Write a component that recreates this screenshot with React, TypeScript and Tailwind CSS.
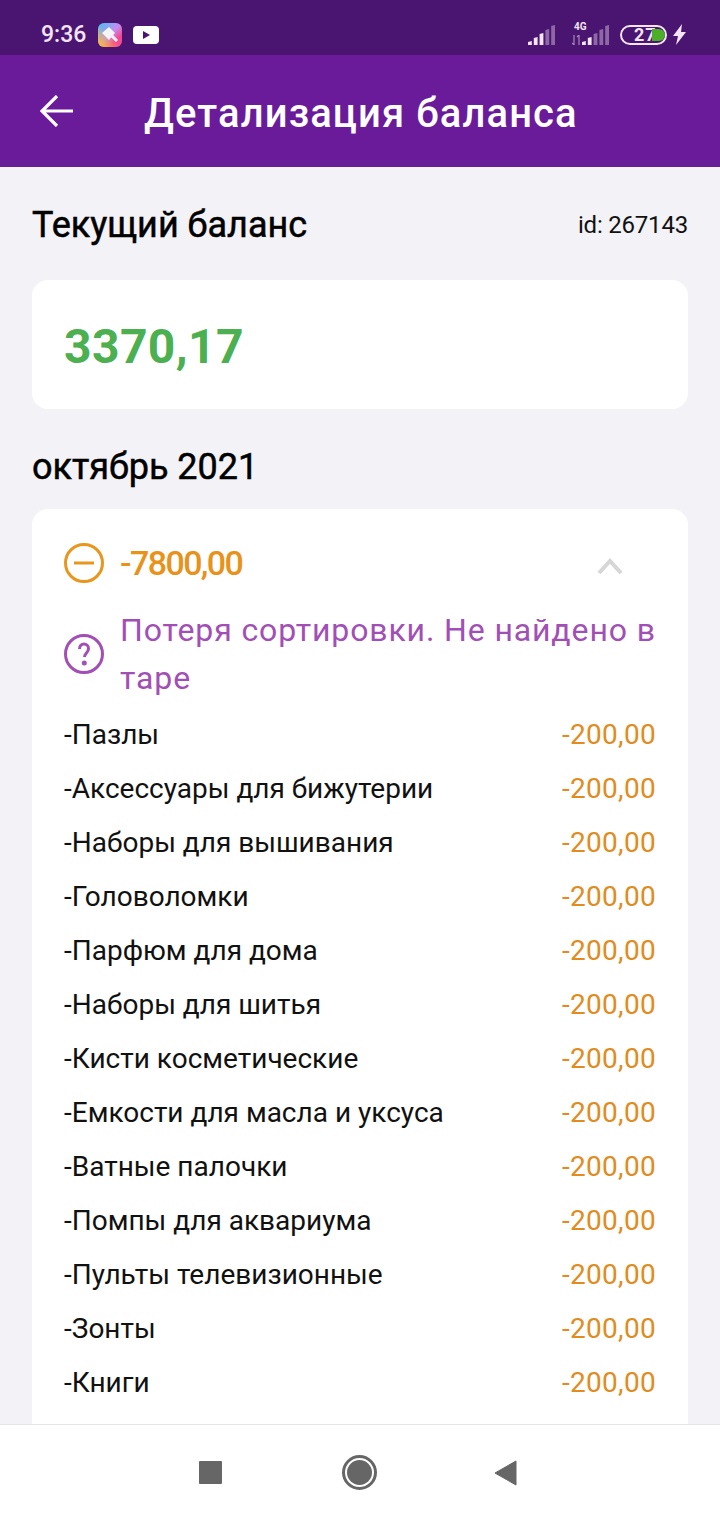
import React from 'react';

const ITEMS = [
  'Пазлы',
  'Аксессуары для бижутерии',
  'Наборы для вышивания',
  'Головоломки',
  'Парфюм для дома',
  'Наборы для шитья',
  'Кисти косметические',
  'Емкости для масла и уксуса',
  'Ватные палочки',
  'Помпы для аквариума',
  'Пульты телевизионные',
  'Зонты',
  'Книги',
];

const Signal: React.FC<{ lit: number; className?: string }> = ({ lit, className }) => (
  <svg width="28" height="20" viewBox="0 0 28 20" className={className}>
    {[0, 1, 2, 3, 4].map(i => {
      const h = 4 + i * 4;
      return (
        <path
          key={i}
          d={`M${i * 5.8} 20v-${h - 1}l3.800 -1v${h}z`}
          fill="#f3e5f5"
          opacity={i < lit ? 1 : 0.4}
        />
      );
    })}
  </svg>
);

const StatusBar = () => (
  <div className="h-[55px] bg-[#4a1570] flex items-center pl-[41px] pr-[34px] pt-[14px] text-[#f3e5f5]">
    <span className="w-[45px] text-[23px] font-medium leading-none">9:36</span>
    <svg width="24" height="24" viewBox="0 0 24 24" className="ml-[12px]">
      <defs>
        <linearGradient id="appIcon" x1="0" y1="0" x2="1" y2="1">
          <stop offset="0" stopColor="#3fc4f5" />
          <stop offset="0.5" stopColor="#c58cf0" />
          <stop offset="0.75" stopColor="#f5478f" />
          <stop offset="1" stopColor="#f04fa0" />
        </linearGradient>
        <linearGradient id="appIconY" x1="0" y1="1" x2="0.5" y2="0.5">
          <stop offset="0" stopColor="#ffc21f" />
          <stop offset="1" stopColor="#ffc21f" stopOpacity="0" />
        </linearGradient>
      </defs>
      <rect width="24" height="24" rx="6" fill="url(#appIcon)" />
      <rect width="24" height="24" rx="6" fill="url(#appIconY)" />
      <path d="M4 10 11 4l6 6-6 7z" fill="#f5f5f5" />
      <path d="m14 13 5 5" stroke="#f5f5f5" strokeWidth="3" />
    </svg>
    <svg width="26" height="18" viewBox="0 0 26 18" className="ml-[11px]">
      <rect width="26" height="18" rx="4" fill="#fff" />
      <path d="M10 5v8l7-4z" fill="#4a1570" />
    </svg>
    <div className="flex-1" />
    <Signal lit={3} className="mt-[1px]" />
    <div className="relative w-[37px] h-[20px] ml-[16px] mt-[1px]">
      <span className="absolute left-[2px] -top-[3px] text-[10px] font-bold leading-none">4G</span>
      <svg width="9" height="10" viewBox="0 0 9 10" className="absolute left-0 bottom-0" stroke="#f3e5f5" strokeOpacity="0.55" strokeWidth="1.2" fill="none">
        <path d="M2 0v10M0 8l2 2M7 10V0M5 2l2-2" />
      </svg>
      <Signal lit={2} className="absolute left-[10px] bottom-0" />
    </div>
    <div className="relative w-[47px] h-[20px] rounded-full border-2 border-[#f3e5f5] flex items-center ml-[11px] mt-[1px]">
      <span className="ml-[12px] text-[18px] font-bold leading-none tracking-[1px]">27</span>
      <span className="absolute right-[0px] top-[2px] w-[13px] h-[12px] rounded-r-full bg-[#4caf28]" />
    </div>
    <svg width="13" height="21" viewBox="0 0 13 21" className="ml-[6px]">
      <path d="M9 0 0 12h5l-2 9 10-13H8z" fill="#f3e5f5" />
    </svg>
  </div>
);

const Header = () => (
  <div className="h-[112px] bg-[#6a1b9a] flex items-center shrink-0">
    <svg width="34" height="32" viewBox="0 0 34 32" fill="none" stroke="#fff" strokeWidth="3.2" className="ml-[40px]">
      <path d="M33 16H3M17 1 2 16l15 15" />
    </svg>
    <h1 className="ml-[70px] pt-[5px] text-[40px] font-medium text-white tracking-[1.1px] leading-none">Детализация баланса</h1>
  </div>
);

const BottomNav = () => (
  <div className="h-[96px] bg-white border-t border-[#e5e5e5] flex items-center shrink-0 pl-[199px]">
    <div className="w-[23px] h-[23px] bg-[#666] rounded-[1px]" />
    <div className="ml-[120px] w-[35px] h-[35px] rounded-full border-[3px] border-[#666] flex items-center justify-center">
      <div className="w-[25px] h-[25px] rounded-full bg-[#666]" />
    </div>
    <svg width="23" height="26" viewBox="0 0 23 26" className="ml-[117px]">
      <path d="M22 1v24L1 13z" fill="#666" stroke="#666" strokeLinejoin="round" />
    </svg>
  </div>
);

export default function App() {
  return (
    <div className="w-[720px] h-[1520px] flex flex-col overflow-hidden bg-[#f3f2f7]" style={{ fontFamily: 'Roboto, sans-serif' }}>
      <StatusBar />
      <Header />

      <div className="flex-1 min-h-0 overflow-hidden px-[32px]">
        <div className="flex items-center justify-between h-[113px] pt-[3px]">
          <h2 className="text-[36px] font-normal [-webkit-text-stroke:0.5px_#000] text-black leading-none">Текущий баланс</h2>
          <span className="text-[24px] tracking-[-0.2px] text-[#111] leading-none">id: 267143</span>
        </div>

        <div className="h-[129px] bg-white rounded-[16px] flex items-center px-[32px] pt-[4px]">
          <span className="text-[48px] font-bold text-[#4caf50] tracking-[0.4px] leading-none">3370,17</span>
        </div>

        <h2 className="h-[100px] pt-[16px] flex items-center text-[36px] font-normal [-webkit-text-stroke:0.5px_#000] text-black leading-none">октябрь 2021</h2>

        <div className="bg-white rounded-[16px] px-[32px] pb-[60px]">
          <div className="pt-[34px] mb-[23px] flex items-center">
            <svg width="40" height="40" viewBox="0 0 40 40" fill="none" stroke="#e8961e" strokeWidth="3">
              <circle cx="20" cy="20" r="18.5" />
              <path d="M10 20h20" />
            </svg>
            <span className="ml-[16px] text-[34px] font-medium text-[#e8921a] tracking-[-1.600px] leading-none">-7800,00</span>
            <svg width="26" height="16" viewBox="0 0 26 16" fill="none" stroke="#d6d6d6" strokeWidth="4" className="ml-auto mr-[33px] mt-[6px]">
              <path d="M2 15 13 3l11 12" />
            </svg>
          </div>

          <div className="flex items-center">
            <svg width="40" height="40" viewBox="0 0 40 40" fill="none" stroke="#a24fb5" strokeWidth="3" className="shrink-0">
              <circle cx="20" cy="20" r="18.5" />
              <path d="M15.500 15c0-3 2-5 4.500-5s4.500 2 4.500 4.700c0 4-3.700 4.300-4.200 8.300" />
              <circle cx="20.300" cy="29" r="1" fill="#a24fb5" />
            </svg>
            <p className="ml-[16px] text-[32px] text-[#a24fb5] tracking-[0.87px] leading-[48px]">Потеря сортировки. Не найдено в таре</p>
          </div>

          <div className="mt-[6px]">
            {ITEMS.map(item => (
              <div key={item} className="h-[54px] flex items-center justify-between text-[28px]">
                <span className="text-[#111]">-{item}</span>
                <span className="text-[#e08c1e] tracking-[0.3px]">-200,00</span>
              </div>
            ))}
          </div>
        </div>
      </div>

      <BottomNav />
    </div>
  );
}
